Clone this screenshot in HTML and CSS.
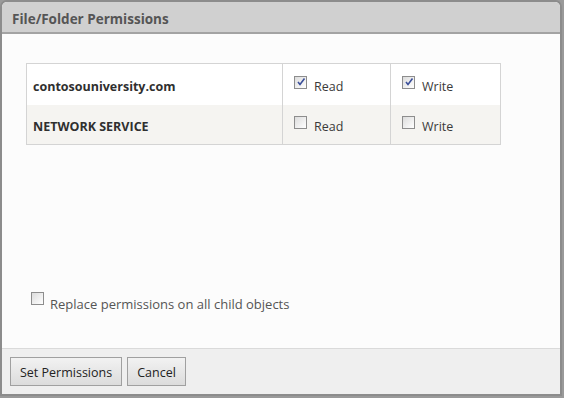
FILE: index.html
```html
<!DOCTYPE html>
<html>
<head>
<meta charset="utf-8">
<link rel="stylesheet" href="styles.css">
</head>
<body>
<div class="dialog">
  <div class="title">File/Folder Permissions</div>
  <div class="body">
    <table class="perms">
      <colgroup><col class="c-name"><col class="c-read"><col class="c-write"></colgroup>
      <tr class="row-a">
        <td class="name">contosouniversity.com</td>
        <td class="perm"><span class="cb checked"><svg viewBox="0 0 10 10" width="10" height="10"><path d="M2 5 L4 7.5 L8.5 1.5" fill="none" stroke="#3b4f9a" stroke-width="1.6"/></svg></span>Read</td>
        <td class="perm"><span class="cb checked"><svg viewBox="0 0 10 10" width="10" height="10"><path d="M2 5 L4 7.5 L8.5 1.5" fill="none" stroke="#3b4f9a" stroke-width="1.6"/></svg></span>Write</td>
      </tr>
      <tr class="row-b">
        <td class="name">NETWORK SERVICE</td>
        <td class="perm"><span class="cb"></span>Read</td>
        <td class="perm"><span class="cb"></span>Write</td>
      </tr>
    </table>
    <div class="replace"><span class="cb"></span>Replace permissions on all child objects</div>
  </div>
  <div class="footer">
    <button class="btn">Set Permissions</button>
    <button class="btn">Cancel</button>
  </div>
</div>
</body>
</html>
```
FILE: styles.css
```css
html, body {
  margin: 0;
  padding: 0;
  background: #9a9a9a;
  font-family: "Open Sans", "DejaVu Sans", sans-serif;
}
.dialog {
  width: 562px;
  height: 396px;
  box-sizing: border-box;
  border: 2px solid #8c8c8c;
  border-radius: 7px 7px 0 0;
  background: #fcfcfc;
  display: flex;
  flex-direction: column;
  overflow: hidden;
}
.title {
  height: 30px;
  background: #d0d0d0;
  border-bottom: 2px solid #a3a3a3;
  padding-left: 10px;
  font-weight: bold;
  font-size: 13.5px;
  line-height: 35px;
  color: #555555;
  flex: none;
}
.body {
  flex: 1;
  padding: 29px 24px 0;
}
.perms {
  border-collapse: collapse;
  table-layout: fixed;
  width: 474px;
  border: 1px solid #d4d4d4;
}
.c-name { width: 256px; }
.c-read { width: 108px; }
.c-write { width: 110px; }
.perms td {
  border-left: 1px solid #d4d4d4;
  padding: 4px 0 0 0;
  vertical-align: middle;
  box-sizing: border-box;
}
.row-a td { height: 41px; background: #ffffff; }
.row-b td { height: 40px; background: #f5f4f1; }
.name {
  padding-left: 6px !important;
  font-weight: bold;
  font-size: 12.5px;
  color: #2f2f2f;
}
.perm {
  padding-left: 11px !important;
  font-size: 12.5px;
  color: #3a3a3a;
}
.cb {
  display: inline-block;
  width: 11px;
  height: 11px;
  border: 1px solid #8d8d8d;
  background: linear-gradient(135deg, #dcdcdc, #ffffff);
  vertical-align: top;
  margin-right: 7px;
  margin-top: -2px;
  position: relative;
}
.cb svg {
  position: absolute;
  left: 1px;
  top: 0px;
}
.replace {
  margin-top: 150px;
  margin-left: 5px;
  font-size: 13px;
  color: #555555;
  line-height: 18px;
}
.replace .cb {
  margin-top: -3px;
  margin-right: 6px;
}
.footer {
  flex: none;
  height: 46px;
  border-top: 1px solid #dadada;
  background: #efefef;
  padding: 8px 0 0 8px;
  box-sizing: border-box;
  display: flex;
  gap: 5px;
  align-items: flex-start;
}
.btn {
  height: 29px;
  padding: 1px 9px 0;
  border: 1px solid #a0a0a0;
  background: linear-gradient(#f2f2f2, #dcdcdc);
  font-family: "Open Sans", "DejaVu Sans", sans-serif;
  font-size: 12.5px;
  color: #222222;
  margin: 0;
}
```
